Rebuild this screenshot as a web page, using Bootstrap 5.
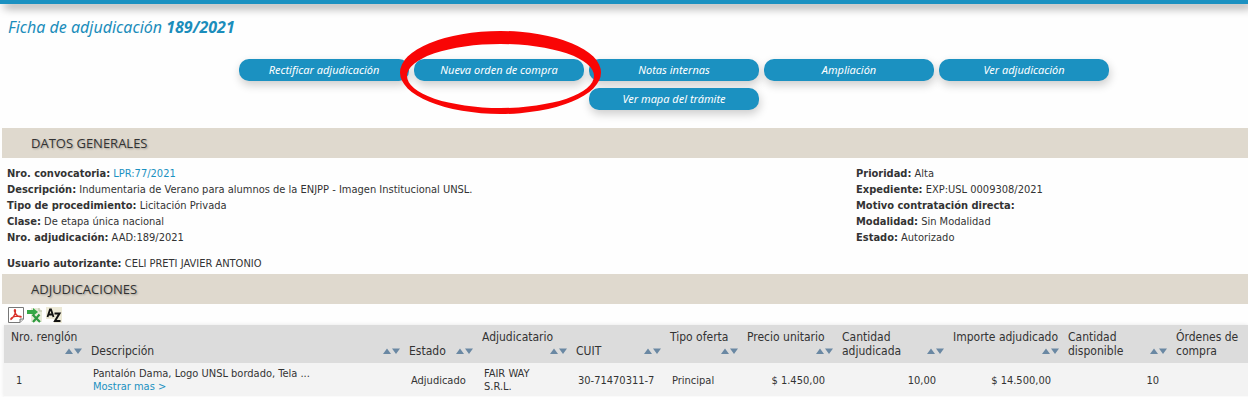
<!DOCTYPE html>
<html lang="es">
<head>
<meta charset="utf-8">
<meta name="viewport" content="width=device-width, initial-scale=1">
<title>Ficha de adjudicación 189/2021</title>
<link href="https://cdn.jsdelivr.net/npm/bootstrap@5.3.0/dist/css/bootstrap.min.css" rel="stylesheet">
<style>
  body { font-family: "DejaVu Sans Condensed", "DejaVu Sans", sans-serif; font-size: 11px; line-height: 16px; color: #333; background: #fefefe; }
  a { color: #1b91c1; text-decoration: none; }
  .top-strip { height: 4px; background: #1b91c1; box-shadow: 4px 3px 10px rgba(0,0,0,.6); }
  .page-title { font: italic 16px/24px "Noto Sans", sans-serif; color: #1b8dbb; margin: 11px 8px 20px; }
  .actions { max-width: 900px; gap: 7px 5px; }
  .actions-wrap { padding-left: 100px; margin-bottom: 18px; }
  .pill { width: 170px; height: 22px; border-radius: 10px; background: #1b91c1; color: #fff; font: italic 11px/22px "Noto Sans", sans-serif; padding: 0; border: 0; box-shadow: 1px 4px 10px rgba(0,0,0,.2); }
  .pill:hover { background: #1b91c1; color: #fff; }
  .ring { left: -14px; top: -28px; z-index: 2; pointer-events: none; }
  .section-bar { background: #dfd9ce; margin: 0 0 0 2px; padding: 0 29px; font: 13px/30px "Open Sans", sans-serif; color: #333; text-shadow: 1px 1px 2px rgba(0,0,0,.3); }
  .facts { padding: 8px 7px 2px; }
  .facts dl div { height: 16px; }
  .facts dt, .facts dd { display: inline; margin: 0; }
  .side { width: 385px; }
  .user { margin-top: 10px; }
  .tools { padding: 3px 8px 2px; gap: 3px; }
  .tools button { width: 16px; height: 16px; padding: 0; border: 0; background: none; display: block; }
  .tools svg, .sort svg { display: block; }
  .grid-wrap { padding-left: 4px; }
  .awards { width: 100%; table-layout: fixed; box-shadow: 0 0 4px rgba(0,0,0,.1); }
  .awards th { background: #dcdcdc; font-size: 12px; font-weight: 400; line-height: 14px; padding: 5px 4px 5px 5px; vertical-align: bottom; white-space: nowrap; }
  .awards td { background: #f3f3f3; line-height: 13px; padding: 4px 12px 3px 7px; border-bottom: 1px solid #fafafa; white-space: nowrap; }
  .awards th:first-child { padding-left: 7px; }
  .awards td:first-child { padding-left: 12px; }
  .sort { border: 0; background: none; padding: 0; height: 14px; }
</style>
</head>
<body>
<div class="top-strip"></div>
<h1 class="page-title">Ficha de adjudicación <strong>189/2021</strong></h1>
<div class="actions-wrap">
  <div class="actions d-flex flex-wrap justify-content-center mx-auto">
    <button type="button" class="btn pill">Rectificar adjudicación</button>
    <div class="position-relative">
      <button type="button" class="btn pill">Nueva orden de compra</button>
      <svg class="ring position-absolute" width="202" height="84" viewBox="0 0 202 84" aria-hidden="true"><path fill="#f90505" fill-rule="evenodd" d="M0 41.500A100.500 41.500 0 0 1 201 41.500A100.500 41.500 0 0 1 0 41.500ZM7 45A93.500 32 0 0 0 194 45A93.500 32 0 0 0 7 45Z"/></svg>
    </div>
    <button type="button" class="btn pill">Notas internas</button>
    <button type="button" class="btn pill">Ampliación</button>
    <button type="button" class="btn pill">Ver adjudicación</button>
    <button type="button" class="btn pill">Ver mapa del trámite</button>
  </div>
</div>
<main>
  <h2 class="section-bar">DATOS GENERALES</h2>
  <div class="facts">
    <div class="d-flex justify-content-between">
      <dl class="mb-0">
        <div><dt>Nro. convocatoria:</dt> <dd><a href="#">LPR:77/2021</a></dd></div>
        <div><dt>Descripción:</dt> <dd>Indumentaria de Verano para alumnos de la ENJPP - Imagen Institucional UNSL.</dd></div>
        <div><dt>Tipo de procedimiento:</dt> <dd>Licitación Privada</dd></div>
        <div><dt>Clase:</dt> <dd>De etapa única nacional</dd></div>
        <div><dt>Nro. adjudicación:</dt> <dd>AAD:189/2021</dd></div>
      </dl>
      <dl class="side mb-0 flex-shrink-0">
        <div><dt>Prioridad:</dt> <dd>Alta</dd></div>
        <div><dt>Expediente:</dt> <dd>EXP:USL 0009308/2021</dd></div>
        <div><dt>Motivo contratación directa:</dt> <dd></dd></div>
        <div><dt>Modalidad:</dt> <dd>Sin Modalidad</dd></div>
        <div><dt>Estado:</dt> <dd>Autorizado</dd></div>
      </dl>
    </div>
    <dl class="user mb-0"><div><dt>Usuario autorizante:</dt> <dd>CELI PRETI JAVIER ANTONIO</dd></div></dl>
  </div>
  <h2 class="section-bar">ADJUDICACIONES</h2>
  <div class="tools d-flex">
    <button type="button" aria-label="Exportar a PDF"><svg width="16" height="16" viewBox="0 0 16 16"><path d="M.5.500H15.500V12L12 15.500H.5Z" fill="#fff" stroke="#777"/><path d="M15.500 12H12V15.500" fill="#ddd" stroke="#777"/><path d="M3 12.500C5 11 8 6 7.500 3.500C7 1.500 5.500 3 7 5.500C8.500 8.500 10.500 10 13 10C14 9 9 8.500 5 10C3 11 2.500 12 3 12.500Z" fill="none" stroke="#d9302a" stroke-width="1.300"/></svg></button>
    <button type="button" aria-label="Exportar a Excel"><svg width="16" height="16" viewBox="0 0 16 16"><path d="M4 1H12L15 4V15H4Z" fill="#e7ead8"/><path d="M12 1V4H15" fill="none" stroke="#b9bfa4"/><path d="M0 3H6V1L11 5L6 9V7H0Z" fill="#35a846"/><path d="M5.500 7.500L13 15M12.500 7.500L6 15" stroke="#2d9a3f" stroke-width="2.200"/></svg></button>
    <button type="button" aria-label="Ordenar"><svg width="16" height="16" viewBox="0 0 16 16"><path d="M0 0H16V16H8V12H0Z" fill="#ece9d6"/><path d="M1.500 10L4 2.500H5L7.500 10M2.500 7.500H6.500" fill="none" stroke="#111" stroke-width="1.800"/><path d="M8.500 6.500H13.500L9 14H14.500" fill="none" stroke="#111" stroke-width="2"/></svg></button>
  </div>
  <svg width="0" height="0" class="position-absolute" aria-hidden="true"><symbol id="arrows" viewBox="0 0 17 14"><path d="M0 10L4 4.500L8 10ZM9 4.500H17L13 10Z" fill="#6a88a3"/></symbol></svg>
  <div class="grid-wrap">
    <table class="awards">
      <colgroup><col style="width:82px"><col><col style="width:73px"><col style="width:94px"><col style="width:94px"><col style="width:77px"><col style="width:95px"><col style="width:111px"><col style="width:115px"><col style="width:108px"><col style="width:77px"></colgroup>
      <thead><tr>
        <th><div class="d-flex flex-wrap align-items-end">Nro. renglón<button class="sort ms-auto" aria-label="Ordenar"><svg width="17" height="14"><use href="#arrows"/></svg></button></div></th>
        <th><div class="d-flex flex-wrap align-items-end">Descripción<button class="sort ms-auto" aria-label="Ordenar"><svg width="17" height="14"><use href="#arrows"/></svg></button></div></th>
        <th><div class="d-flex flex-wrap align-items-end">Estado<button class="sort ms-auto" aria-label="Ordenar"><svg width="17" height="14"><use href="#arrows"/></svg></button></div></th>
        <th><div class="d-flex flex-wrap align-items-end">Adjudicatario<button class="sort ms-auto" aria-label="Ordenar"><svg width="17" height="14"><use href="#arrows"/></svg></button></div></th>
        <th><div class="d-flex flex-wrap align-items-end">CUIT<button class="sort ms-auto" aria-label="Ordenar"><svg width="17" height="14"><use href="#arrows"/></svg></button></div></th>
        <th><div class="d-flex flex-wrap align-items-end">Tipo oferta<button class="sort ms-auto" aria-label="Ordenar"><svg width="17" height="14"><use href="#arrows"/></svg></button></div></th>
        <th><div class="d-flex flex-wrap align-items-end">Precio unitario<button class="sort ms-auto" aria-label="Ordenar"><svg width="17" height="14"><use href="#arrows"/></svg></button></div></th>
        <th><div class="d-flex flex-wrap align-items-end"><span>Cantidad<br>adjudicada</span><button class="sort ms-auto" aria-label="Ordenar"><svg width="17" height="14"><use href="#arrows"/></svg></button></div></th>
        <th><div class="d-flex flex-wrap align-items-end">Importe adjudicado<button class="sort ms-auto" aria-label="Ordenar"><svg width="17" height="14"><use href="#arrows"/></svg></button></div></th>
        <th><div class="d-flex flex-wrap align-items-end"><span>Cantidad<br>disponible</span><button class="sort ms-auto" aria-label="Ordenar"><svg width="17" height="14"><use href="#arrows"/></svg></button></div></th>
        <th>Órdenes de<br>compra</th>
      </tr></thead>
      <tbody><tr>
        <td>1</td>
        <td>Pantalón Dama, Logo UNSL bordado, Tela ...<br><a href="#">Mostrar mas &gt;</a></td>
        <td>Adjudicado</td>
        <td>FAIR WAY<br>S.R.L.</td>
        <td>30-71470311-7</td>
        <td>Principal</td>
        <td class="text-end">$ 1.450,00</td>
        <td class="text-end">10,00</td>
        <td class="text-end">$ 14.500,00</td>
        <td class="text-end">10</td>
        <td></td>
      </tr></tbody>
    </table>
  </div>
</main>
</body>
</html>
